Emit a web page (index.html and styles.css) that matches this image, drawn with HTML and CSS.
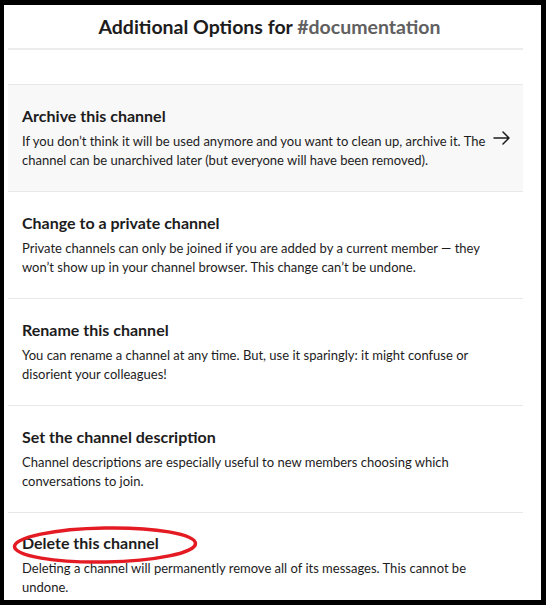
FILE: index.html
```html
<!DOCTYPE html>
<html>
<head>
<meta charset="utf-8">
<link rel="stylesheet" href="styles.css">
</head>
<body>
<div class="frame">
  <div class="header">
    <h1 class="title">Additional Options for <span class="channel">#documentation</span></h1>
  </div>
  <div class="spacer"></div>
  <div class="option option-active">
    <div class="option-text">
      <h2 class="option-title">Archive this channel</h2>
      <p class="option-desc">If you don’t think it will be used anymore and you want to clean up, archive it. The channel can be unarchived later (but everyone will have been removed).</p>
    </div>
    <svg class="arrow" width="18" height="14" viewBox="0 0 18 14"><path d="M1 7H16M10 1L16 7L10 13" fill="none" stroke="#1d1c1d" stroke-width="1.5" stroke-linecap="round" stroke-linejoin="round"/></svg>
  </div>
  <div class="option">
    <div class="option-text">
      <h2 class="option-title">Change to a private channel</h2>
      <p class="option-desc">Private channels can only be joined if you are added by a current member — they won’t show up in your channel browser. This change can’t be undone.</p>
    </div>
  </div>
  <div class="option">
    <div class="option-text">
      <h2 class="option-title">Rename this channel</h2>
      <p class="option-desc">You can rename a channel at any time. But, use it sparingly: it might confuse or disorient your colleagues!</p>
    </div>
  </div>
  <div class="option">
    <div class="option-text">
      <h2 class="option-title">Set the channel description</h2>
      <p class="option-desc">Channel descriptions are especially useful to new members choosing which conversations to join.</p>
    </div>
  </div>
  <div class="option option-delete">
    <div class="option-text">
      <h2 class="option-title">Delete this channel</h2>
      <p class="option-desc">Deleting a channel will permanently remove all of its messages. This cannot be undone.</p>
    </div>
    <svg class="circle" width="188" height="42" viewBox="0 0 188 42"><ellipse cx="94" cy="21" rx="90.5" ry="17" fill="none" stroke="#e41b23" stroke-width="3.5" transform="rotate(-1 94 21)"/></svg>
  </div>
</div>
</body>
</html>
```
FILE: styles.css
```css
html, body {
  margin: 0;
  padding: 0;
  background: #000;
  height: 605px;
  overflow: hidden;
}
.frame {
  margin: 5px 5px 0 4px;
  width: 537px;
  height: 595px;
  background: #fff;
  overflow: hidden;
  font-family: Lato, "Noto Sans", sans-serif;
  color: #1d1c1d;
}
.header {
  margin: 0 18px 0 4px;
  height: 43px;
  border-bottom: 2px solid #ececec;
  display: flex;
  align-items: center;
  justify-content: center;
}
.title {
  margin: 0;
  font-size: 19.5px;
  font-weight: 700;
  line-height: 24px;
  padding-left: 8px;
}
.channel {
  color: #616061;
}
.spacer {
  height: 34px;
  margin: 0 18px 0 4px;
}
.option {
  position: relative;
  margin: 0 18px 0 4px;
  border-top: 1px solid #e8e8e8;
  height: 106px;
  box-sizing: content-box;
  padding: 0 14px;
  display: flex;
  align-items: center;
}
.option-active {
  background: #f8f8f8;
}
.option-text {
  flex: 1;
  min-width: 0;
  padding-bottom: 2px;
}
.option-title {
  margin: 0 0 5px;
  font-size: 16px;
  font-weight: 700;
  line-height: 22px;
}
.option-desc {
  margin: 0;
  font-size: 13px;
  line-height: 19px;
  max-width: 466px;
}
.arrow {
  flex: none;
  margin-left: 2px;
  margin-right: -2px;
}
.option-delete {
  align-items: flex-start;
  padding-top: 19px;
}
.circle {
  position: absolute;
  left: 2.5px;
  top: 10.5px;
}
```
